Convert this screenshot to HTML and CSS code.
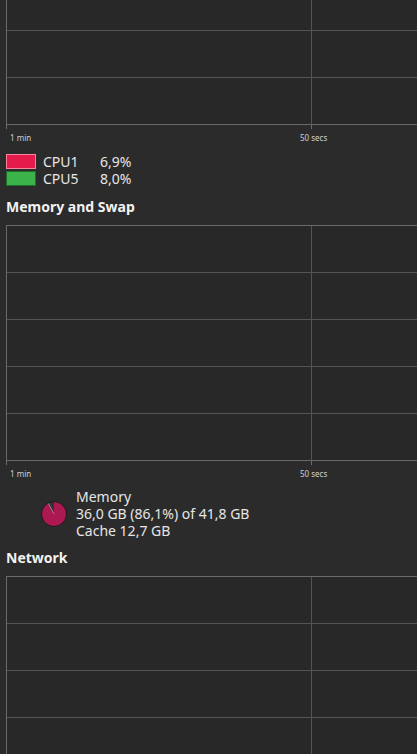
FILE: index.html
```html
<!DOCTYPE html>
<html>
<head>
<meta charset="utf-8">
<link rel="stylesheet" href="styles.css">
</head>
<body>
<main class="page">
  <section class="section section-first">
    <div class="chart">
      <div class="cell c1"></div><div class="cell c2"></div>
      <div class="cell c1"></div><div class="cell c2"></div>
      <div class="cell c1"></div><div class="cell c2"></div>
      <div class="cell c1"></div><div class="cell c2"></div>
      <div class="cell c1"></div><div class="cell c2"></div>
      <div class="tick c1"></div><div class="tick c2"></div>
    </div>
    <div class="axis"><span class="axis-left">1 min</span><span class="axis-right">50 secs</span></div>
    <div class="legend">
      <div class="legend-row"><span class="swatch swatch-red"></span><span class="legend-name">CPU1</span><span class="legend-val">6,9%</span></div>
      <div class="legend-row"><span class="swatch swatch-green"></span><span class="legend-name">CPU5</span><span class="legend-val">8,0%</span></div>
    </div>
  </section>

  <section class="section">
    <h2 class="heading">Memory and Swap</h2>
    <div class="chart">
      <div class="cell c1"></div><div class="cell c2"></div>
      <div class="cell c1"></div><div class="cell c2"></div>
      <div class="cell c1"></div><div class="cell c2"></div>
      <div class="cell c1"></div><div class="cell c2"></div>
      <div class="cell c1"></div><div class="cell c2"></div>
      <div class="tick c1"></div><div class="tick c2"></div>
    </div>
    <div class="axis"><span class="axis-left">1 min</span><span class="axis-right">50 secs</span></div>
    <div class="mem">
      <svg class="pie" width="28" height="28" viewBox="0 0 28 28">
        <circle cx="14" cy="14" r="12.5" fill="#333333"/>
        <path d="M14 14 L14 1.5 A12.5 12.5 0 1 1 8.13 2.96 Z" fill="#ab1852"/>
        <line x1="14" y1="14" x2="8.13" y2="2.96" stroke="#9a9a9a" stroke-width="0.9"/>
        <circle cx="14" cy="14" r="12.5" fill="none" stroke="#1c1c1c" stroke-width="1"/>
      </svg>
      <div class="mem-text">
        <div class="mem-line">Memory</div>
        <div class="mem-line">36,0 GB (86,1%) of 41,8 GB</div>
        <div class="mem-line">Cache 12,7 GB</div>
      </div>
    </div>
  </section>

  <section class="section">
    <h2 class="heading heading-tight">Network</h2>
    <div class="chart">
      <div class="cell c1"></div><div class="cell c2"></div>
      <div class="cell c1"></div><div class="cell c2"></div>
      <div class="cell c1"></div><div class="cell c2"></div>
      <div class="cell c1"></div><div class="cell c2"></div>
      <div class="cell c1"></div><div class="cell c2"></div>
      <div class="tick c1"></div><div class="tick c2"></div>
    </div>
  </section>
</main>
</body>
</html>
```

FILE: styles.css
```css
html, body {
  margin: 0;
  padding: 0;
  background: #2b2b2b;
  overflow: hidden;
  width: 417px;
  height: 754px;
}

.page {
  font-family: "Noto Sans", "DejaVu Sans", sans-serif;
  color: #e6e6e6;
  font-size: 14px;
  padding-left: 6px;
}

.section-first {
  margin-top: -111px;
}

.chart {
  display: grid;
  grid-template-columns: 305px 200px;
  grid-template-rows: repeat(5, 47px) 4px;
  width: 505px;
  border-left: 1px solid #6a6a6a;
  border-top: 1px solid #6a6a6a;
  background: #282828;
}

.cell {
  border-right: 1px solid #545454;
  border-bottom: 1px solid #545454;
}

.cell:nth-child(9), .cell:nth-child(10) {
  border-bottom-color: #6a6a6a;
}

.tick {
  background: #2b2b2b;
}

.tick.c1 {
  border-right: 1px solid #6a6a6a;
}

.axis {
  display: grid;
  grid-template-columns: 294px auto;
  font-size: 8px;
  line-height: 10px;
  color: #cfcfcf;
  padding-top: 4px;
  height: 10px;
}

.axis-left {
  padding-left: 4px;
}

.legend {
  margin-top: 10px;
  display: flex;
  flex-direction: column;
}

.legend-row {
  display: flex;
  align-items: center;
  height: 17px;
  line-height: 17px;
}

.swatch {
  width: 28px;
  height: 13px;
  border: 1px solid;
  flex: none;
}

.swatch-red {
  background: #e51b4c;
  border-color: #f7839c;
}

.swatch-green {
  background: #3bb34a;
  border-color: #1f6e2a;
}

.legend-name {
  margin-left: 7px;
  width: 57px;
}

.heading {
  margin: 10px 0 8px 0;
  font-size: 14px;
  font-weight: bold;
  line-height: 20px;
  color: #f2f2f2;
}

.heading-tight {
  margin-top: 9px;
}

.mem {
  display: flex;
  align-items: center;
  margin-top: 9px;
  padding-left: 34px;
}

.mem-line {
  height: 17px;
  line-height: 17px;
}

.pie {
  flex: none;
  margin-right: 8px;
}
```
